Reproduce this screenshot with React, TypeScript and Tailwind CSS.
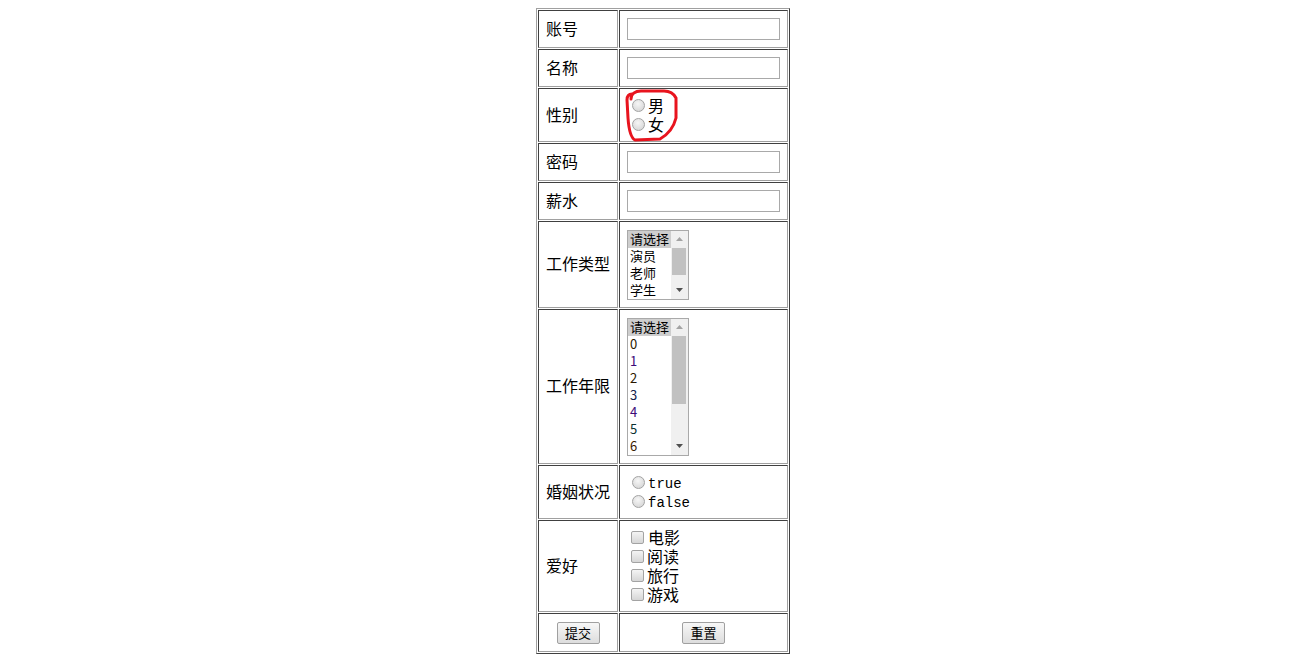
import React from 'react';

function Cell({ children, className = '' }: { children?: React.ReactNode; className?: string }) {
  return (
    <div
      className={`relative flex items-center border border-t-[#404040] border-l-[#404040] border-r-[#a0a0a0] border-b-[#a0a0a0] p-[7px] ${className}`}
    >
      {children}
    </div>
  );
}

function Label({ text }: { text: string }) {
  return <span className="text-[16px] leading-[16px] mb-[3px] text-black">{text}</span>;
}

function TextBox() {
  return <div className="w-[153px] h-[22px] border border-[#a9a9a9] bg-white" />;
}

function Radio() {
  return (
    <span className="inline-block shrink-0 w-[13px] h-[13px] rounded-full border border-[#a3a3a3] bg-[radial-gradient(circle_at_45%_35%,#f6f6f6,#d0d0d0)] ml-[5px] mr-[3px]" />
  );
}

function Check() {
  return (
    <span className="inline-block shrink-0 w-[13px] h-[13px] rounded-[2px] border border-[#a3a3a3] bg-linear-to-b from-[#f4f4f4] to-[#d6d6d6] ml-[4px] mr-[3px]" />
  );
}

interface ListProps {
  options: { text: string; color?: string }[];
  thumbH: number;
}

function ListBox({ options, thumbH }: ListProps) {
  return (
    <div className="flex w-[62px] border border-[#a9a9a9] bg-white">
      <div className="flex-1 flex flex-col">
        {options.map((o, i) => (
          <div
            key={i}
            className={`h-[17px] pl-[2px] text-[13px] leading-[16px] whitespace-nowrap ${i === 0 ? 'bg-[#cecece]' : ''}`}
            style={{ color: o.color ?? '#000' }}
          >
            {o.text}
          </div>
        ))}
      </div>
      <div className="w-[17px] bg-[#f0f0f0] flex flex-col">
        <div className="h-[17px] flex items-center justify-center">
          <svg width="7" height="4" viewBox="0 0 7 4">
            <path d="M3.5 0 L7 4 L0 4 Z" fill="#a3a3a3" />
          </svg>
        </div>
        <div className="pl-[1px] pr-[2px]">
          <div className="bg-[#c1c1c1]" style={{ height: thumbH }} />
        </div>
        <div className="flex-1" />
        <div className="h-[17px] flex items-center justify-center">
          <svg width="7" height="4" viewBox="0 0 7 4">
            <path d="M0 0 L7 0 L3.5 4 Z" fill="#505050" />
          </svg>
        </div>
      </div>
    </div>
  );
}

function Button({ text }: { text: string }) {
  return (
    <span className="inline-flex items-center justify-center w-[43px] h-[22px] border border-[#a0a0a0] rounded-[2px] bg-linear-to-b from-[#f7f7f7] to-[#dddddd] text-[13px] leading-none text-black">
      {text}
    </span>
  );
}

function Line({ children }: { children: React.ReactNode }) {
  return <div className="h-[19px] flex items-center">{children}</div>;
}

export default function App() {
  const jobs = [{ text: '请选择' }, { text: '演员' }, { text: '老师' }, { text: '学生' }];
  const years = [
    { text: '请选择' },
    { text: '0', color: '#2a2000' },
    { text: '1', color: '#3c0a78' },
    { text: '2', color: '#2a1800' },
    { text: '3', color: '#10204a' },
    { text: '4', color: '#3c0a78' },
    { text: '5', color: '#0a3030' },
    { text: '6', color: '#3a2000' },
  ];

  return (
    <div className="min-h-[661px] bg-white font-['Noto_Sans_CJK_SC',sans-serif] text-black flex justify-center items-start pt-[8px] pl-[18px]">
      <div className="grid grid-cols-[80px_169px] grid-rows-[38px_38px_54px_38px_38px_87px_155px_54px_92px_39px] gap-px p-px border border-t-[#a0a0a0] border-l-[#a0a0a0] border-r-[#404040] border-b-[#404040]">
        <Cell><Label text="账号" /></Cell>
        <Cell><TextBox /></Cell>

        <Cell><Label text="名称" /></Cell>
        <Cell><TextBox /></Cell>

        <Cell><Label text="性别" /></Cell>
        <Cell>
          <div className="flex flex-col">
            <Line>
              <Radio />
              <span className="text-[16px] leading-[16px] mb-[2px]">男</span>
            </Line>
            <Line>
              <Radio />
              <span className="text-[16px] leading-[16px] mb-[2px]">女</span>
            </Line>
          </div>
          <svg className="absolute left-[3px] top-[-1px]" width="56" height="56" viewBox="0 0 56 56" fill="none">
            <path
              d="M8 11 C8 6 12 3 18 3 L41 3 C47 3 51 6 53 10 L53 30 C51 38 46 46 37 51 L12 52 C8 50 6 44 5 30 L4 12 C4 8 6 6 9 6"
              stroke="#e8141e"
              strokeWidth="3"
              strokeLinecap="round"
              strokeLinejoin="round"
            />
          </svg>
        </Cell>

        <Cell><Label text="密码" /></Cell>
        <Cell><TextBox /></Cell>

        <Cell><Label text="薪水" /></Cell>
        <Cell><TextBox /></Cell>

        <Cell><Label text="工作类型" /></Cell>
        <Cell><ListBox options={jobs} thumbH={27} /></Cell>

        <Cell><Label text="工作年限" /></Cell>
        <Cell><ListBox options={years} thumbH={68} /></Cell>

        <Cell><Label text="婚姻状况" /></Cell>
        <Cell>
          <div className="flex flex-col">
            <Line>
              <Radio />
              <span className="font-['Liberation_Mono',monospace] font-normal text-[14px] leading-[14px] mt-[2px]">true</span>
            </Line>
            <Line>
              <Radio />
              <span className="font-['Liberation_Mono',monospace] font-normal text-[14px] leading-[14px] mt-[2px]">false</span>
            </Line>
          </div>
        </Cell>

        <Cell><Label text="爱好" /></Cell>
        <Cell>
          <div className="flex flex-col">
            <Line>
              <Check />
              <span className="text-[16px] leading-[16px] mb-[2px] ml-[1px]">电影</span>
            </Line>
            <Line>
              <Check />
              <span className="text-[16px] leading-[16px] mb-[2px]">阅读</span>
            </Line>
            <Line>
              <Check />
              <span className="text-[16px] leading-[16px] mb-[2px]">旅行</span>
            </Line>
            <Line>
              <Check />
              <span className="text-[16px] leading-[16px] mb-[2px]">游戏</span>
            </Line>
          </div>
        </Cell>

        <Cell className="justify-center"><Button text="提交" /></Cell>
        <Cell className="justify-center"><Button text="重置" /></Cell>
      </div>
    </div>
  );
}
